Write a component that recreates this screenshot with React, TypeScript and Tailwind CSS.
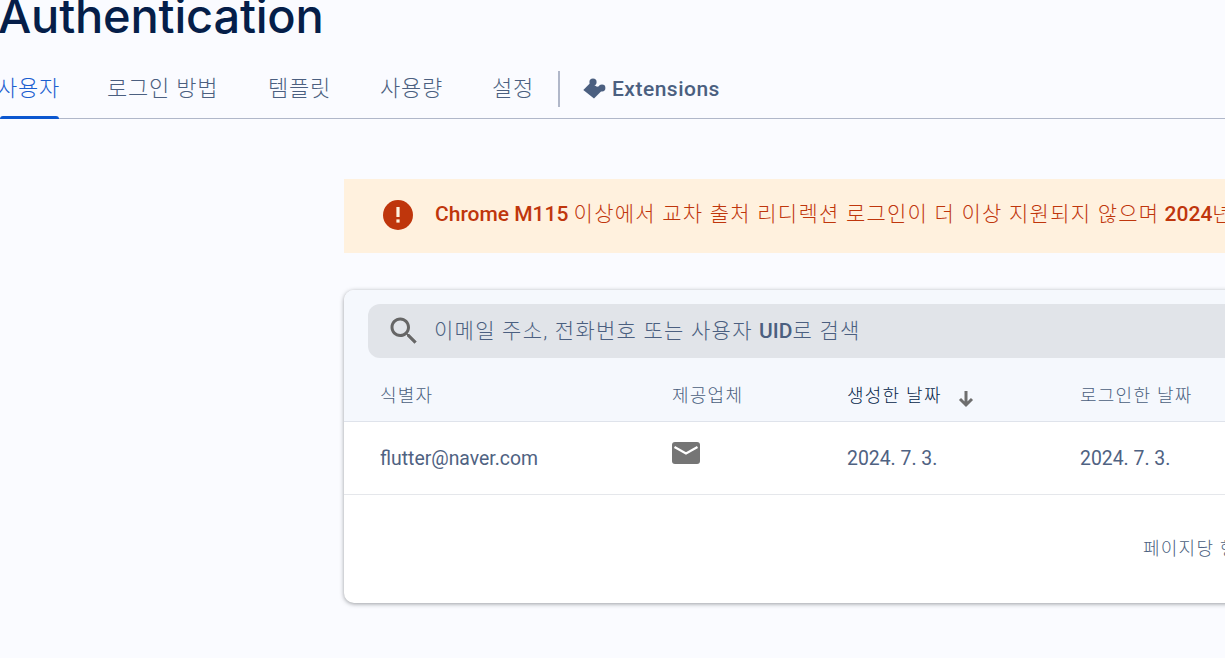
const ko = "font-['Roboto','Noto_Sans_CJK_KR',sans-serif]";

const tabs = [
  { label: "사용자", width: "w-[107px]" },
  { label: "로그인 방법", width: "w-[161px]" },
  { label: "템플릿", width: "w-[112px]" },
  { label: "사용량", width: "w-[112px]" },
  { label: "설정", width: "w-[66px]" },
];

function PuzzleIcon() {
  return (
    <svg width="24" height="21" viewBox="0 0 24 21" className="shrink-0 fill-[#4b5f80]">
      <path d="M1.3 12 8.5 4.8 15 8.7 18 8 20 12.5 12 20.5Z" />
      <circle cx="11" cy="4" r="3.6" />
      <circle cx="20" cy="10" r="3.4" />
    </svg>
  );
}

function AlertIcon() {
  return (
    <svg width="30" height="30" viewBox="0 0 30 30" className="shrink-0">
      <circle cx="15" cy="15" r="15" fill="#bf360c" />
      <rect x="13.4" y="7" width="3.2" height="10" fill="#fff3e0" />
      <rect x="13.4" y="19.4" width="3.2" height="3.2" fill="#fff3e0" />
    </svg>
  );
}

function SearchIcon() {
  return (
    <svg width="36" height="36" viewBox="0 0 24 24" className="shrink-0 fill-[#666666]">
      <path d="M15.5 14h-.79l-.28-.27C15.41 12.59 16 11.11 16 9.5 16 5.91 13.09 3 9.5 3S3 5.91 3 9.5 5.91 16 9.5 16c1.61 0 3.09-.59 4.23-1.57l.27.28v.79l5 4.99L20.49 19l-4.99-5zm-6 0C7.01 14 5 11.99 5 9.5S7.01 5 9.5 5 14 7.01 14 9.5 11.99 14 9.5 14z" />
    </svg>
  );
}

function SortIcon() {
  return (
    <svg width="20" height="20" viewBox="0 0 20 20" className="mt-[5px] shrink-0">
      <path d="M10 2v14M4 10l6 6 6-6" fill="none" stroke="#6e6e6e" strokeWidth="3" />
    </svg>
  );
}

function MailIcon() {
  return (
    <svg width="28" height="22" viewBox="0 0 28 22">
      <rect width="28" height="22" rx="3" fill="#757575" />
      <path d="M2.5 5 14 11.5 25.5 5" fill="none" stroke="#fff" strokeWidth="2.2" />
    </svg>
  );
}

export default function App() {
  return (
    <div className={`h-[658px] w-[1225px] overflow-hidden bg-[#fafbff] ${ko}`}>
      <h1 className="-mt-[19px] -ml-[2px] h-[77px] font-['Inter',sans-serif] text-[47px] leading-[69px] font-medium tracking-[-0.2px] whitespace-nowrap text-[#051e49]">
        Authentication
      </h1>

      <nav className="flex h-[61px] items-stretch border-b border-[#b0b7c9]">
        {tabs.map((tab, i) => (
          <div key={tab.label} className={`${tab.width} relative shrink-0`}>
            <span
              className={`absolute top-[17px] left-0 text-[22px] leading-[28px] font-light tracking-[0.8px] whitespace-nowrap ${
                i === 0 ? "-ml-[3px] text-[#1a5fd0]" : "text-[#4b5f80]"
              }`}
            >
              {tab.label}
            </span>
            {i === 0 && <div className="absolute right-[48px] -bottom-px left-0 h-[3px] rounded-t-sm bg-[#0b57d0]" />}
          </div>
        ))}
        <div className="mt-[13px] h-[36px] w-[2px] shrink-0 bg-[#b0b7c9]" />
        <div className="ml-[22px] flex items-center gap-[6px]">
          <PuzzleIcon />
          <span className="mt-[4px] text-[21px] font-medium tracking-[0.5px] text-[#4b5f80]">Extensions</span>
        </div>
      </nav>

      <main className="w-[1100px] pt-[60px] pl-[344px]">
        <div className="flex h-[74px] w-[1100px] items-center gap-[22px] bg-[#fff1de] pb-[2px] pl-[39px] text-[21px] whitespace-nowrap text-[#bf360c]">
          <AlertIcon />
          <p className="-mt-[1px]">
            <span className="font-medium">Chrome M115</span>{" "}
            <span className="font-light tracking-[1.25px]">이상에서 교차 출처 리디렉션 로그인이 더 이상 지원되지 않으며</span>{" "}
            <span className="font-medium">2024</span>
            <span className="font-light tracking-[1.25px]">년 이후</span>
          </p>
        </div>

        <section className="mt-[37px] h-[313px] w-[1100px] overflow-hidden rounded-[10px] bg-white shadow-[0_1px_4px_rgba(60,64,67,0.5)]">
          <div className="bg-[#f5f8fd] px-[24px] pt-[14px]">
            <div className="flex h-[54px] items-center rounded-[12px] bg-[#e1e4e9] pl-[18px] text-[#4b5f80]">
              <SearchIcon />
              <span className="mt-[1px] ml-[12px] text-[21px] font-light whitespace-nowrap">
                <span className="tracking-[1.25px]">이메일 주소, 전화번호 또는 사용자 </span>
                <span className="font-medium">UID</span>
                <span className="tracking-[1.25px]">로 검색</span>
              </span>
            </div>
            <div className="-mx-[24px] grid h-[64px] grid-cols-[292px_175px_233px_1fr] border-b border-[#dfe3eb] pt-[26px] pl-[36px] text-[18px] leading-[24px] font-light tracking-[1.25px] text-[#4b5f80]">
              <span>식별자</span>
              <span>제공업체</span>
              <span className="flex items-start gap-[14px] text-[#051e49]">
                생성한 날짜
                <SortIcon />
              </span>
              <span>로그인한 날짜</span>
            </div>
          </div>

          <div className="grid h-[73px] grid-cols-[292px_175px_233px_1fr] items-center border-b border-[#e5e7eb] pl-[36px] text-[19.4px] text-[#4f6282]">
            <span className="mt-[2px]">flutter@naver.com</span>
            <span className="-mt-[10px]">
              <MailIcon />
            </span>
            <span className="mt-[2px]">2024. 7. 3.</span>
            <span className="mt-[2px]">2024. 7. 3.</span>
          </div>

          <div className="pt-[42px] pl-[799px] text-[18px] leading-[24px] font-light tracking-[1.25px] whitespace-nowrap text-[#4b5f80]">
            페이지당 행 수:
          </div>
        </section>
      </main>
    </div>
  );
}
